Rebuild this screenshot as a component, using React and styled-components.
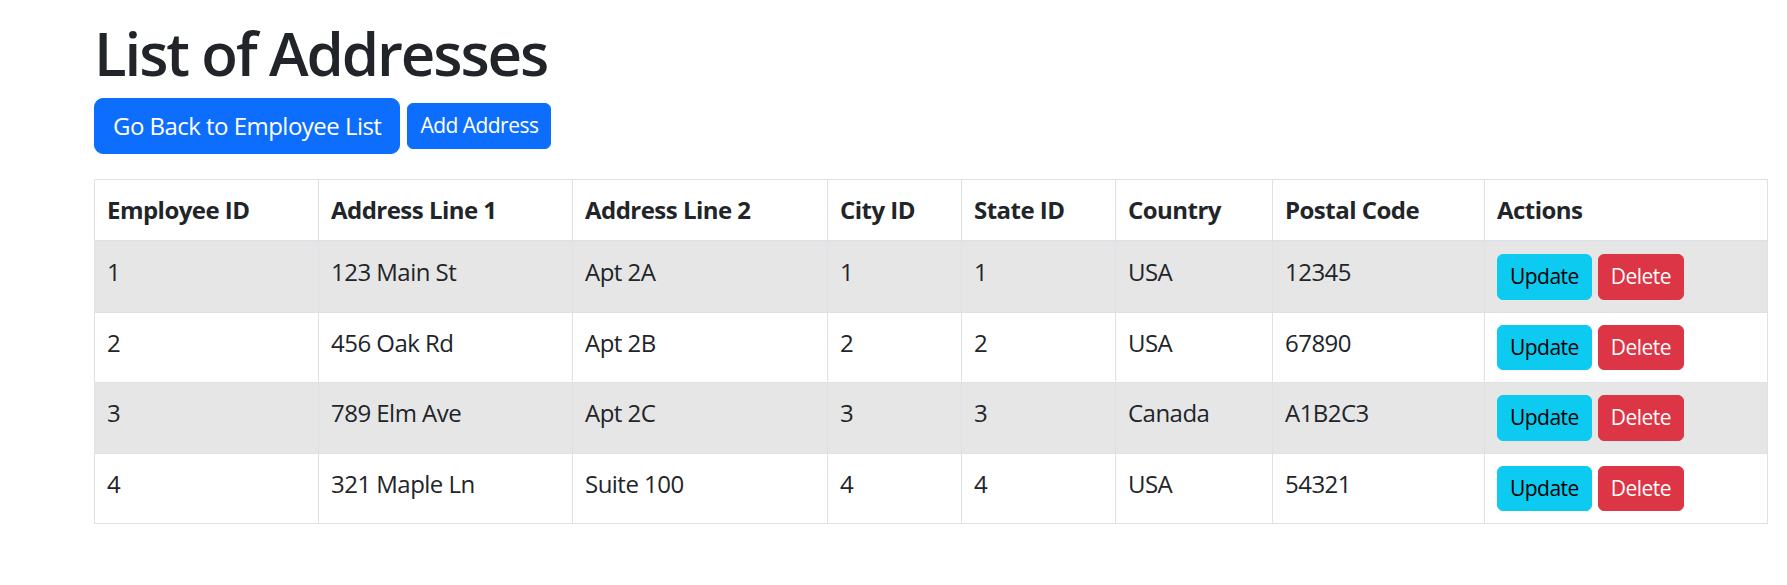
import React from 'react';
import styled, { createGlobalStyle } from 'styled-components';

const GlobalStyle = createGlobalStyle`
  body {
    margin: 0;
    font-family: "Segoe UI", "Open Sans", sans-serif;
    font-size: 24px;
    line-height: 1.5;
    letter-spacing: -0.022em;
    color: #212529;
    background: #fff;
  }
`;

const Page = styled.div`
  padding: 17px 20px 0 94px;
`;

const Title = styled.h1`
  margin: 0 0 9px;
  font-size: 60px;
  font-weight: 600;
  line-height: 1.2;
  letter-spacing: -0.035em;
`;

const Toolbar = styled.div`
  display: flex;
  align-items: center;
  gap: 7px;
`;

const Button = styled.button`
  display: inline-block;
  font-family: inherit;
  letter-spacing: inherit;
  font-size: ${(p) => (p.$small ? '21px' : '24px')};
  line-height: 1.5;
  padding: ${(p) => (p.$small ? '6px 12px' : '9px 18px')};
  border-radius: ${(p) => (p.$small ? '6px' : '9px')};
  border: 1px solid ${(p) => p.$bg};
  background: ${(p) => p.$bg};
  color: ${(p) => p.$fg};
  cursor: pointer;
`;

const Table = styled.table`
  width: 1673px;
  margin-top: 25px;
  border-collapse: collapse;
  table-layout: fixed;
  border: 1px solid #dee2e6;
`;

const Th = styled.th`
  box-sizing: border-box;
  width: ${(p) => p.$w}px;
  padding: 12px;
  text-align: left;
  vertical-align: top;
  font-weight: 700;
  border: 1px solid #dee2e6;
  border-bottom: 2px solid #dee2e6;
`;

const Row = styled.tr`
  background: ${(p) => (p.$striped ? '#e6e6e6' : '#fff')};
`;

const Td = styled.td`
  padding: 12px;
  vertical-align: top;
  border: 1px solid #dee2e6;
`;

const Actions = styled.div`
  display: flex;
  gap: 6px;
`;

const columns = [
  ['Employee ID', 224],
  ['Address Line 1', 254],
  ['Address Line 2', 255],
  ['City ID', 134],
  ['State ID', 154],
  ['Country', 157],
  ['Postal Code', 212],
  ['Actions', 283],
];

const addresses = [
  { id: 1, line1: '123 Main St', line2: 'Apt 2A', city: 1, state: 1, country: 'USA', postal: '12345' },
  { id: 2, line1: '456 Oak Rd', line2: 'Apt 2B', city: 2, state: 2, country: 'USA', postal: '67890' },
  { id: 3, line1: '789 Elm Ave', line2: 'Apt 2C', city: 3, state: 3, country: 'Canada', postal: 'A1B2C3' },
  { id: 4, line1: '321 Maple Ln', line2: 'Suite 100', city: 4, state: 4, country: 'USA', postal: '54321' },
];

const App = () => (
  <>
    <GlobalStyle />
    <Page>
      <Title>List of Addresses</Title>
      <Toolbar>
        <Button $bg="#0d6efd" $fg="#fff">Go Back to Employee List</Button>
        <Button $small $bg="#0d6efd" $fg="#fff">Add Address</Button>
      </Toolbar>
      <Table>
        <thead>
          <tr>
            {columns.map(([label, w]) => (
              <Th key={label} $w={w}>{label}</Th>
            ))}
          </tr>
        </thead>
        <tbody>
          {addresses.map((a, i) => (
            <Row key={a.id} $striped={i % 2 === 0}>
              <Td>{a.id}</Td>
              <Td>{a.line1}</Td>
              <Td>{a.line2}</Td>
              <Td>{a.city}</Td>
              <Td>{a.state}</Td>
              <Td>{a.country}</Td>
              <Td>{a.postal}</Td>
              <Td>
                <Actions>
                  <Button $small $bg="#0dcaf0" $fg="#000">Update</Button>
                  <Button $small $bg="#dc3545" $fg="#fff">Delete</Button>
                </Actions>
              </Td>
            </Row>
          ))}
        </tbody>
      </Table>
    </Page>
  </>
);

export default App;
